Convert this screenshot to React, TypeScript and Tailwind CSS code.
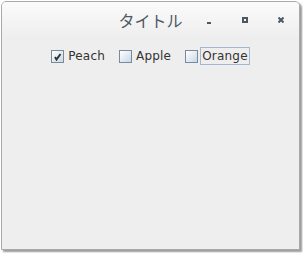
import { useState } from "react";

const items = ["Peach", "Apple", "Orange"];

function CheckBox({
  label,
  checked,
  focused,
  onToggle,
}: {
  label: string;
  checked: boolean;
  focused: boolean;
  onToggle: () => void;
}) {
  return (
    <button
      type="button"
      onClick={onToggle}
      className="flex h-[18px] items-center text-[12px] leading-none tracking-[0.2px] text-[#333333]"
    >
      <span className="flex h-[13px] w-[13px] items-center justify-center border border-[#7a8a99] bg-gradient-to-br from-[#ffffff] to-[#c9d8e7]">
        {checked && (
          <svg width="9" height="9" viewBox="0 0 9 9">
            <path
              d="M2 5 L3.5 7.5 L7.5 2"
              fill="none"
              stroke="#333333"
              strokeWidth={2}
            />
          </svg>
        )}
      </span>
      <span
        className={`ml-[2px] flex h-[18px] items-center border px-[1px] ${
          focused ? "border-[#a3b8cc]" : "border-transparent"
        }`}
      >
        {label}
      </span>
    </button>
  );
}

export default function App() {
  const [checked, setChecked] = useState<Record<string, boolean>>({
    Peach: true,
  });

  return (
    <div
      className="h-[253px] w-[303px] bg-white"
      style={{ fontFamily: '"DejaVu Sans", "Noto Sans CJK JP", sans-serif' }}
    >
      <div className="ml-[1px] mt-[1px] flex h-[249px] w-[299px] flex-col overflow-hidden rounded-t-[5px] border border-[#a9a9a9] bg-[#eeeeee] shadow-[2px_2px_2px_rgba(0,0,0,0.4)]">
        {/* title bar */}
        <div className="grid h-9 shrink-0 grid-cols-[1fr_auto_1fr] items-center bg-gradient-to-b from-[#fbfbfb] to-[#eeeeee]">
          <div />
          <div
            className="text-[16px] text-[#4f5a63]"
            style={{ fontFamily: '"Noto Sans CJK JP", sans-serif' }}
          >
            タイトル
          </div>
          <div className="flex justify-end">
            <div className="flex h-9 w-9 items-center justify-center pt-[2px]">
              <span className="mt-[4px] h-[2px] w-[4px] bg-[#4a5863]" />
            </div>
            <div className="flex h-9 w-9 items-center justify-center">
              <span className="h-[6px] w-[6px] border-2 border-[#4a5863]" />
            </div>
            <div className="flex h-9 w-9 items-center justify-center">
              <svg width="6" height="6" viewBox="0 0 6 6">
                <path
                  d="M0.5 0.5 L5.5 5.5 M5.5 0.5 L0.5 5.5"
                  stroke="#4a5863"
                  strokeWidth={2}
                />
              </svg>
            </div>
          </div>
        </div>

        {/* content */}
        <div className="flex justify-center gap-[12px] pt-[9px]">
          {items.map((it) => (
            <CheckBox
              key={it}
              label={it}
              checked={!!checked[it]}
              focused={it === "Orange"}
              onToggle={() => setChecked((c) => ({ ...c, [it]: !c[it] }))}
            />
          ))}
        </div>
      </div>
    </div>
  );
}
